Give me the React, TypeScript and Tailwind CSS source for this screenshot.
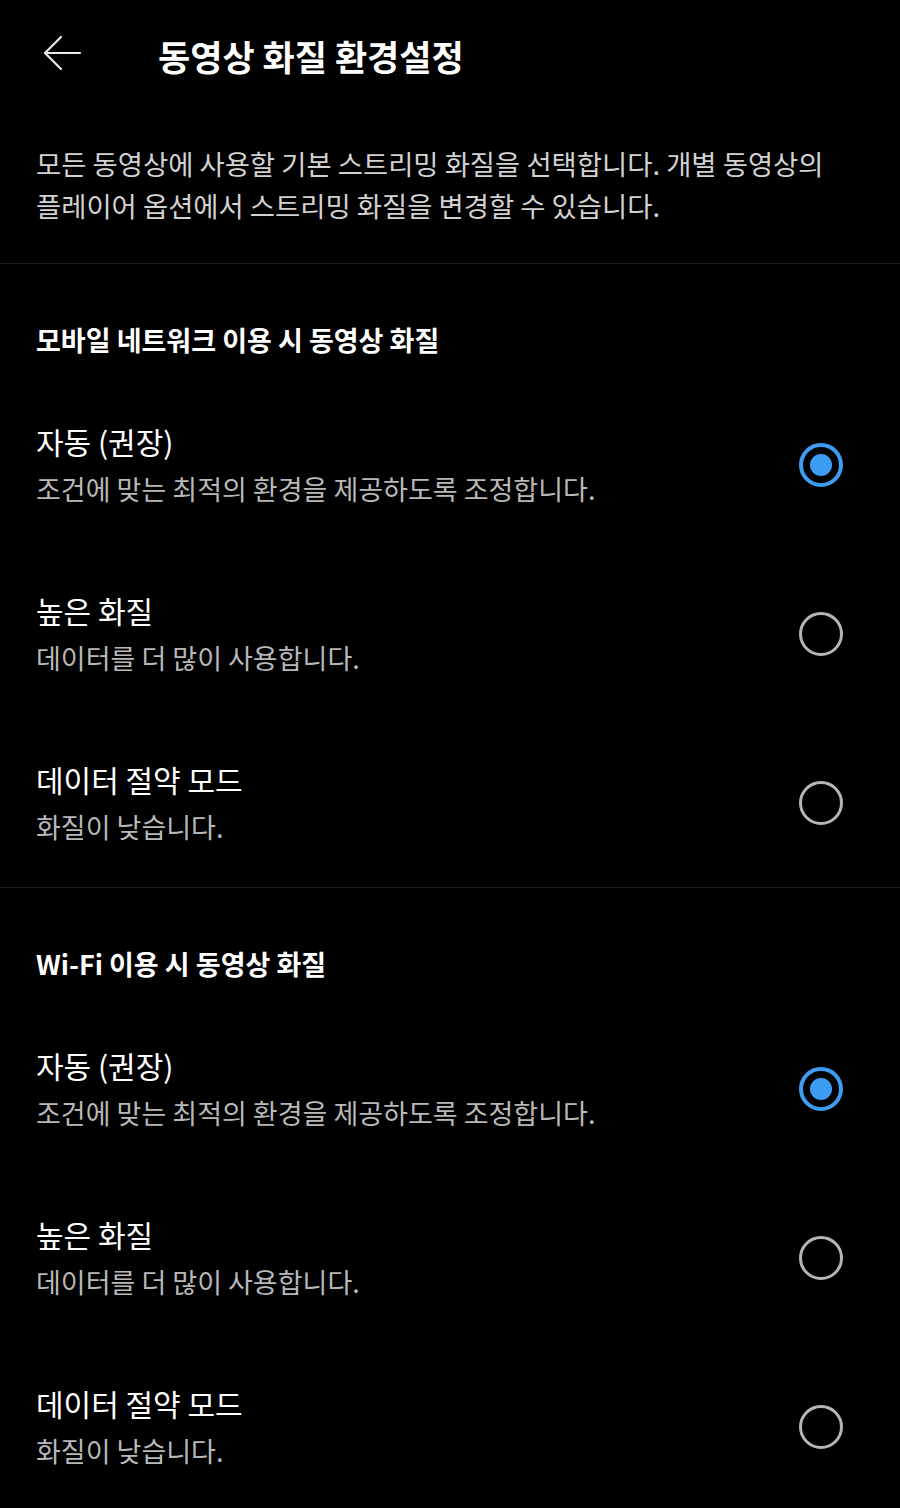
import React from "react";

const font = { fontFamily: '"Noto Sans CJK KR", "Noto Sans", sans-serif' };

type Opt = { title: string; sub: string; selected: boolean };

const options: Opt[] = [
  { title: "자동 (권장)", sub: "조건에 맞는 최적의 환경을 제공하도록 조정합니다.", selected: true },
  { title: "높은 화질", sub: "데이터를 더 많이 사용합니다.", selected: false },
  { title: "데이터 절약 모드", sub: "화질이 낮습니다.", selected: false },
];

function Radio({ selected }: { selected: boolean }) {
  if (selected) {
    return (
      <div className="w-[44px] h-[44px] rounded-full border-[4px] border-[#3d9df2] flex items-center justify-center">
        <div className="w-[22px] h-[22px] rounded-full bg-[#3d9df2]" />
      </div>
    );
  }
  return <div className="w-[44px] h-[44px] rounded-full border-[3px] border-[#b5b5b5]" />;
}

function Section({ title }: { title: string }) {
  return (
    <div className="pt-[56px]">
      <div className="px-[36px] h-[40px] flex items-center text-[27px] font-bold text-white leading-[40px] whitespace-nowrap">
        {title}
      </div>
      <div className="h-[20px]" />
      {options.map((o, i) => (
        <div key={i} className="h-[169px] flex items-center justify-between pl-[36px] pr-[57px]">
          <div className="flex flex-col">
            <div className="text-[30px] text-white leading-[48px] whitespace-nowrap">{o.title}</div>
            <div className="text-[27px] text-[#b8b8b8] leading-[48px] whitespace-nowrap">{o.sub}</div>
          </div>
          <Radio selected={o.selected} />
        </div>
      ))}
    </div>
  );
}

export default function App() {
  return (
    <div className="w-[900px] min-h-[1508px] bg-black overflow-hidden" style={font}>
      <div className="h-[110px] flex items-center">
        <div className="w-[158px] pl-[42px] flex items-center">
          <svg width="40" height="40" viewBox="0 0 40 40" fill="none" stroke="#e8e8e8" strokeWidth="2.2" strokeLinecap="round" strokeLinejoin="round">
            <path d="M38 18 H3" />
            <path d="M19 2 L3 18 L19 34" />
          </svg>
        </div>
        <div className="text-[35px] font-bold text-white leading-none">동영상 화질 환경설정</div>
      </div>
      <div className="px-[36px] pt-[32px] pb-[37px] text-[27.4px] leading-[42px] text-[#d2d2d2] whitespace-nowrap">
        모든 동영상에 사용할 기본 스트리밍 화질을 선택합니다. 개별 동영상의
        <br />
        플레이어 옵션에서 스트리밍 화질을 변경할 수 있습니다.
      </div>
      <div className="h-[1px] bg-[#1c1c1c]" />
      <Section title="모바일 네트워크 이용 시 동영상 화질" />
      <div className="h-[1px] bg-[#1c1c1c]" />
      <Section title="Wi-Fi 이용 시 동영상 화질" />
    </div>
  );
}
